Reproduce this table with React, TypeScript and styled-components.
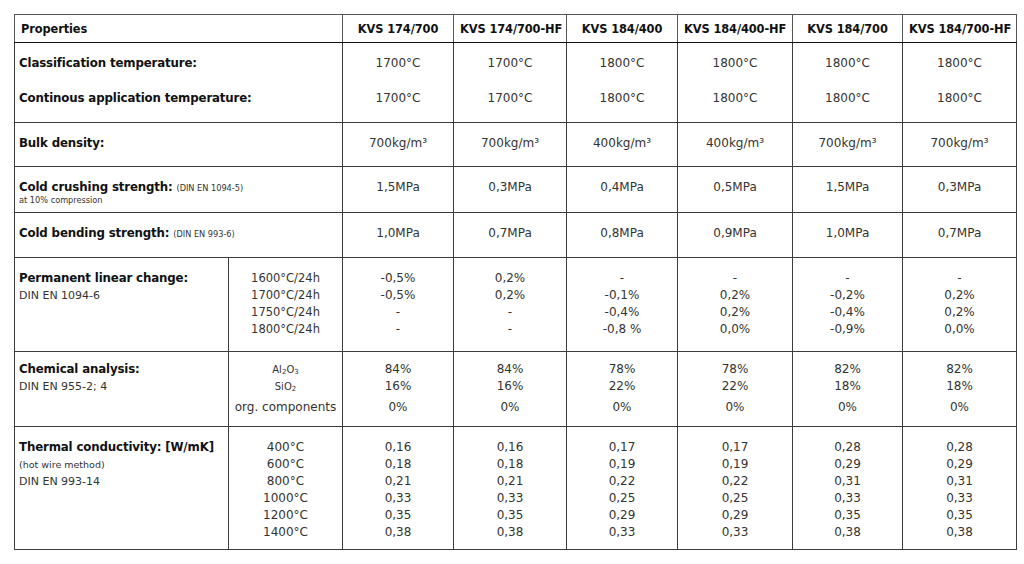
import React from "react";
import { createGlobalStyle, styled } from "styled-components";

const GlobalStyle = createGlobalStyle`
  html, body {
    margin: 0;
    padding: 0;
    background: #ffffff;
  }
  body {
    padding: 14px 8px 0 14px;
    font-family: "DejaVu Sans", "Liberation Sans", sans-serif;
    color: #222;
  }
`;

const products = [
  "KVS 174/700",
  "KVS 174/700-HF",
  "KVS 184/400",
  "KVS 184/400-HF",
  "KVS 184/700",
  "KVS 184/700-HF",
];

const colWidths = [214, 114, 111, 113, 111, 115, 110, 114];

const Table = styled.table`
  width: 1002px;
  table-layout: fixed;
  border-collapse: collapse;
  border: 1.5px solid #8a8a8a;
`;

const HeadCell = styled.th<{ $left?: boolean }>`
  height: 27px;
  padding: 0 6px;
  border: 1px solid #555;
  border-bottom: 1px solid #111;
  text-align: ${(p) => (p.$left ? "left" : "center")};
  vertical-align: middle;
  font-size: 11.4px;
  font-weight: bold;
  letter-spacing: -0.1px;
  color: #111;
  white-space: nowrap;
`;

const Row = styled.tr<{ $h: number }>`
  height: ${(p) => p.$h}px;
`;

const Cell = styled.td<{ $pt?: number; $left?: boolean }>`
  border: 1px solid #3c3c3c;
  padding: ${(p) => p.$pt ?? 12}px 4px 0 4px;
  vertical-align: top;
  text-align: ${(p) => (p.$left ? "left" : "center")};
  font-size: 12px;
  line-height: 17px;
  color: #333;
  white-space: nowrap;
`;

const Lines = styled.div<{ $gap?: number }>`
  display: flex;
  flex-direction: column;
  gap: ${(p) => p.$gap ?? 0}px;
`;

const Line = styled.span<{ $size?: number; $lh?: number; $mt?: number }>`
  display: block;
  font-size: ${(p) => p.$size ?? 12}px;
  line-height: ${(p) => p.$lh ?? 17}px;
  margin-top: ${(p) => p.$mt ?? 0}px;
`;

const Strong = styled.span`
  font-weight: bold;
  font-size: 11.8px;
  letter-spacing: -0.15px;
  color: #111;
`;

const Note = styled.span<{ $size: number }>`
  font-size: ${(p) => p.$size}px;
  color: #333;
`;

const Chem = styled.span`
  font-size: 10px;
  sub {
    font-size: 7px;
    line-height: 0;
    vertical-align: -1px;
  }
`;

const temps = ["1700°C", "1700°C", "1800°C", "1800°C", "1800°C", "1800°C"];
const density = ["700kg/m³", "700kg/m³", "400kg/m³", "400kg/m³", "700kg/m³", "700kg/m³"];
const crushing = ["1,5MPa", "0,3MPa", "0,4MPa", "0,5MPa", "1,5MPa", "0,3MPa"];
const bending = ["1,0MPa", "0,7MPa", "0,8MPa", "0,9MPa", "1,0MPa", "0,7MPa"];

const permanent = [
  ["-0,5%", "-0,5%", "-", "-"],
  ["0,2%", "0,2%", "-", "-"],
  ["-", "-0,1%", "-0,4%", "-0,8 %"],
  ["-", "0,2%", "0,2%", "0,0%"],
  ["-", "-0,2%", "-0,4%", "-0,9%"],
  ["-", "0,2%", "0,2%", "0,0%"],
];

const chemical = [
  ["84%", "16%", "0%"],
  ["84%", "16%", "0%"],
  ["78%", "22%", "0%"],
  ["78%", "22%", "0%"],
  ["82%", "18%", "0%"],
  ["82%", "18%", "0%"],
];

const thermal = [
  ["0,16", "0,18", "0,21", "0,33", "0,35", "0,38"],
  ["0,16", "0,18", "0,21", "0,33", "0,35", "0,38"],
  ["0,17", "0,19", "0,22", "0,25", "0,29", "0,33"],
  ["0,17", "0,19", "0,22", "0,25", "0,29", "0,33"],
  ["0,28", "0,29", "0,31", "0,33", "0,35", "0,38"],
  ["0,28", "0,29", "0,31", "0,33", "0,35", "0,38"],
];

export default function App() {
  return (
    <>
      <GlobalStyle />
      <Table>
        <colgroup>
          {colWidths.map((w, i) => (
            <col key={i} style={{ width: w }} />
          ))}
        </colgroup>
        <thead>
          <tr>
            <HeadCell colSpan={2} $left>
              Properties
            </HeadCell>
            {products.map((p) => (
              <HeadCell key={p}>{p}</HeadCell>
            ))}
          </tr>
        </thead>
        <tbody>
          <Row $h={80}>
            <Cell colSpan={2} $left>
              <Lines $gap={18}>
                <Strong>Classification temperature:</Strong>
                <Strong>Continous application temperature:</Strong>
              </Lines>
            </Cell>
            {temps.map((t, i) => (
              <Cell key={i}>
                <Lines $gap={18}>
                  <span>{t}</span>
                  <span>{t}</span>
                </Lines>
              </Cell>
            ))}
          </Row>

          <Row $h={44}>
            <Cell colSpan={2} $left>
              <Strong>Bulk density:</Strong>
            </Cell>
            {density.map((v, i) => (
              <Cell key={i}>{v}</Cell>
            ))}
          </Row>

          <Row $h={46}>
            <Cell colSpan={2} $left>
              <Line>
                <Strong>Cold crushing strength:</Strong> <Note $size={8.2}>(DIN EN 1094-5)</Note>
              </Line>
              <Line $size={8.2} $lh={10} $mt={-2}>
                <Note $size={8.2}>at 10% compression</Note>
              </Line>
            </Cell>
            {crushing.map((v, i) => (
              <Cell key={i}>{v}</Cell>
            ))}
          </Row>

          <Row $h={45}>
            <Cell colSpan={2} $left>
              <Strong>Cold bending strength:</Strong> <Note $size={8.2}>(DIN EN 993-6)</Note>
            </Cell>
            {bending.map((v, i) => (
              <Cell key={i}>{v}</Cell>
            ))}
          </Row>

          <Row $h={94}>
            <Cell $left>
              <Line>
                <Strong>Permanent linear change:</Strong>
              </Line>
              <Line $size={11}>DIN EN 1094-6</Line>
            </Cell>
            <Cell>
              {["1600°C/24h", "1700°C/24h", "1750°C/24h", "1800°C/24h"].map((s) => (
                <Line key={s} $size={11.5}>
                  {s}
                </Line>
              ))}
            </Cell>
            {permanent.map((col, i) => (
              <Cell key={i}>
                {col.map((v, j) => (
                  <Line key={j}>{v}</Line>
                ))}
              </Cell>
            ))}
          </Row>

          <Row $h={75}>
            <Cell $left $pt={9}>
              <Line>
                <Strong>Chemical analysis:</Strong>
              </Line>
              <Line $size={11}>DIN EN 955-2; 4</Line>
            </Cell>
            <Cell $pt={9}>
              <Line>
                <Chem>
                  Al<sub>2</sub>O<sub>3</sub>
                </Chem>
              </Line>
              <Line>
                <Chem>
                  SiO<sub>2</sub>
                </Chem>
              </Line>
              <Line $mt={4}>org. components</Line>
            </Cell>
            {chemical.map((col, i) => (
              <Cell key={i} $pt={9}>
                <Line>{col[0]}</Line>
                <Line>{col[1]}</Line>
                <Line $mt={4}>{col[2]}</Line>
              </Cell>
            ))}
          </Row>

          <Row $h={123}>
            <Cell $left>
              <Line>
                <Strong>Thermal conductivity: [W/mK]</Strong>
              </Line>
              <Line $size={9.5}>(hot wire method)</Line>
              <Line $size={11}>DIN EN 993-14</Line>
            </Cell>
            <Cell>
              {["400°C", "600°C", "800°C", "1000°C", "1200°C", "1400°C"].map((s) => (
                <Line key={s}>{s}</Line>
              ))}
            </Cell>
            {thermal.map((col, i) => (
              <Cell key={i}>
                {col.map((v, j) => (
                  <Line key={j}>{v}</Line>
                ))}
              </Cell>
            ))}
          </Row>
        </tbody>
      </Table>
    </>
  );
}
